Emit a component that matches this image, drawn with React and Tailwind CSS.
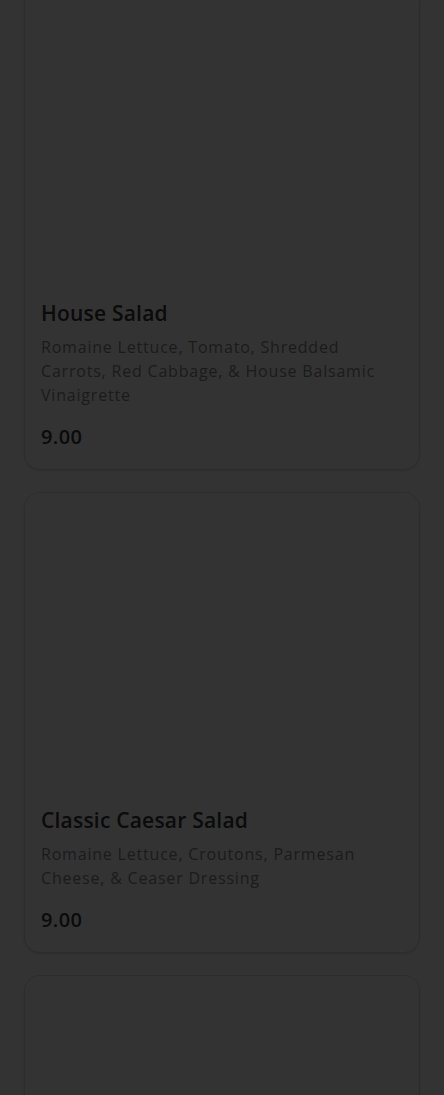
import React from 'react';

const items = [
  {
    name: 'House Salad',
    desc: 'Romaine Lettuce, Tomato, Shredded Carrots, Red Cabbage, & House Balsamic Vinaigrette',
    price: '9.00',
  },
  {
    name: 'Classic Caesar Salad',
    desc: 'Romaine Lettuce, Croutons, Parmesan Cheese, & Ceaser Dressing',
    price: '9.00',
  },
  {
    name: 'Chef Salad',
    desc: 'Romaine Lettuce, Ham, Turkey, Egg, Cheese, & Tomato',
    price: '11.00',
  },
];

const MenuCard = ({ item }) => (
  <div className="rounded-2xl border border-[#dcdcdc] bg-white overflow-hidden shadow-sm">
    {/* image placeholder */}
    <div className="h-[297px] bg-white" />
    <div className="px-4 pt-4 pb-[18px]">
      <h3 className="text-[21px] leading-7 font-semibold tracking-[0.01em] text-[#383838]">{item.name}</h3>
      <p className="mt-2 text-[16px] leading-6 tracking-[0.05em] text-[#888888]">{item.desc}</p>
      <div className="mt-4 text-[20px] leading-7 font-semibold tracking-[0.02em] text-[#383838]">{item.price}</div>
    </div>
  </div>
);

const App = () => {
  return (
    <div
      className="min-h-screen bg-white overflow-hidden"
      style={{ fontFamily: '"Open Sans", "Noto Sans", sans-serif' }}
    >
      <div className="-mt-[15px] px-6 flex flex-col gap-[22px] pb-10">
        {items.map((item) => (
          <MenuCard key={item.name} item={item} />
        ))}
      </div>

      {/* dim overlay */}
      <div className="fixed inset-0 bg-black/80" />
    </div>
  );
};

export default App;
